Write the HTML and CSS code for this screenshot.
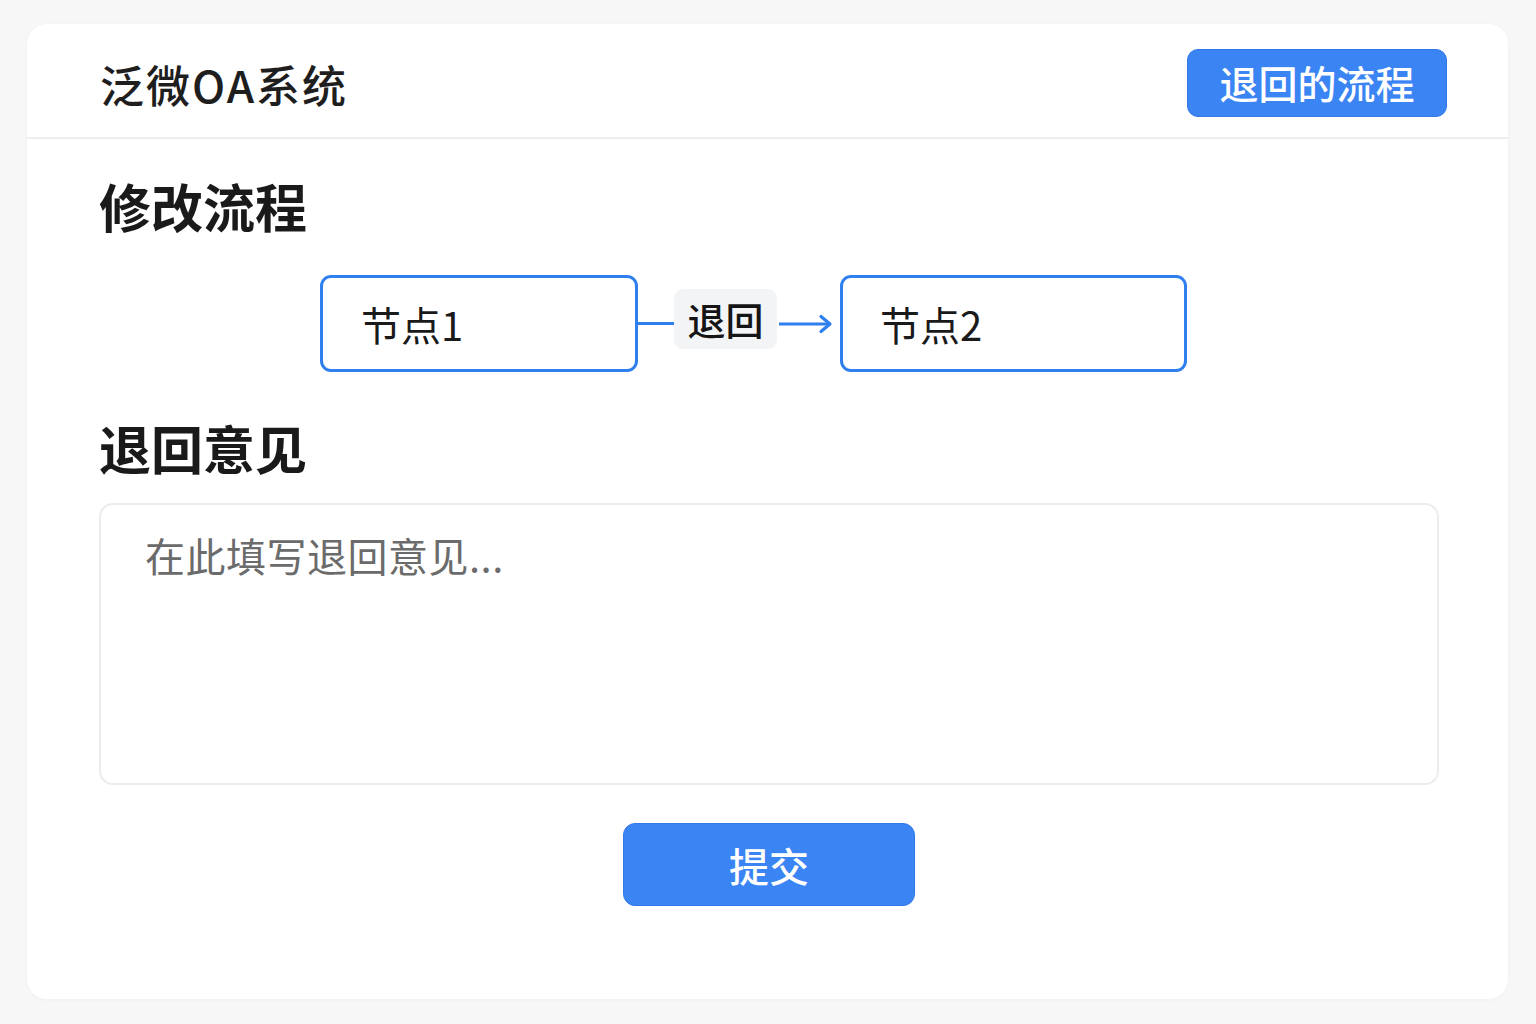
FILE: index.html
```html
<!DOCTYPE html>
<html lang="zh-CN">
<head>
<meta charset="utf-8">
<title>泛微OA系统</title>
<link rel="stylesheet" href="styles.css">
</head>
<body>
<div class="card">
  <header class="topbar">
    <div class="brand">泛微OA系统</div>
    <button class="btn btn-top">退回的流程</button>
  </header>
  <main class="content">
    <h2 class="section-title">修改流程</h2>
    <div class="flow">
      <div class="node node-1">节点1</div>
      <div class="connector">
        <span class="line"></span>
        <span class="edge-label">退回</span>
        <svg class="arrow" width="54" height="20" viewBox="0 0 54 20" aria-hidden="true">
          <line x1="0" y1="10" x2="51" y2="10" stroke="#2f7fee" stroke-width="3.2"/>
          <polyline points="42,2.5 51,10 42,17.5" fill="none" stroke="#2f7fee" stroke-width="3.2" stroke-linecap="round" stroke-linejoin="round"/>
        </svg>
      </div>
      <div class="node node-2">节点2</div>
    </div>
    <h2 class="section-title second">退回意见</h2>
    <textarea class="opinion" placeholder="在此填写退回意见..."></textarea>
    <div class="actions">
      <button class="btn btn-submit">提交</button>
    </div>
  </main>
</div>
</body>
</html>
```

FILE: styles.css
```css
* { box-sizing: border-box; }
html, body { margin: 0; padding: 0; }
body {
  background: #f7f7f7;
  font-family: "Noto Sans CJK SC", "Noto Sans", sans-serif;
  color: #1c1c1c;
  padding: 24px 28px 0 27px;
  width: 1536px;
  height: 1024px;
  overflow: hidden;
}
.card {
  background: #ffffff;
  border-radius: 20px;
  height: 975px;
  box-shadow: 0 1px 4px rgba(0,0,0,0.03);
}
.topbar {
  height: 115px;
  display: flex;
  align-items: center;
  justify-content: space-between;
  padding: 4px 61px 0 73px;
  border-bottom: 2px solid #eeeeee;
}
.brand {
  font-size: 44px;
  font-weight: 500;
  line-height: 1;
  letter-spacing: 2px;
  color: #1e1e1e;
  margin-top: 2px;
}
.btn {
  font-family: "Noto Sans CJK SC", "Noto Sans", sans-serif;
  background: #3b84f4;
  color: #ffffff;
  border: 1px solid #3279e8;
  cursor: pointer;
}
.btn-top {
  width: 260px;
  height: 68px;
  border-radius: 11px;
  font-size: 39px;
  font-weight: 500;
  line-height: 1;
  padding: 0;
}
.content {
  padding: 41px 69px 0 72px;
}
.section-title {
  margin: 0;
  font-size: 52px;
  font-weight: 700;
  line-height: 1;
  color: #1a1a1a;
}
.section-title.second {
  margin-top: 50px;
}
.flow {
  display: flex;
  align-items: center;
  margin: 43px 0 0 221px;
}
.node {
  height: 97px;
  border: 3px solid #2f7fee;
  border-radius: 11px;
  display: flex;
  align-items: center;
  padding: 0 0 0 38px;
  font-size: 40px;
  line-height: 1;
  color: #1a1a1a;
}
.node-1 { width: 318px; }
.node-2 { width: 347px; padding-left: 37px; }
.connector {
  display: flex;
  align-items: center;
}
.line {
  width: 36px;
  height: 3px;
  background: #2f7fee;
}
.edge-label {
  width: 103px;
  height: 60px;
  background: #f3f4f6;
  border-radius: 9px;
  display: flex;
  align-items: center;
  justify-content: center;
  font-size: 38px;
  font-weight: 500;
  line-height: 1;
  color: #151515;
  margin-top: -10px;
}
.arrow {
  display: block;
  margin: 0 7px 0 2px;
}
.opinion {
  display: block;
  width: 1340px;
  height: 282px;
  margin: 29px 0 0 0;
  border: 2px solid #ececec;
  border-radius: 14px;
  padding: 20px 44px;
  font-family: "Noto Sans CJK SC", "Noto Sans", sans-serif;
  font-size: 40px;
  line-height: 1.5;
  letter-spacing: 0.5px;
  color: #333;
  resize: none;
  outline: none;
  background: #fff;
}
.opinion::placeholder {
  color: #6b6b6b;
}
.actions {
  display: flex;
  justify-content: center;
  margin-top: 38px;
}
.btn-submit {
  width: 292px;
  height: 83px;
  border-radius: 12px;
  font-size: 40px;
  font-weight: 500;
  line-height: 1;
  padding: 0;
}
```
